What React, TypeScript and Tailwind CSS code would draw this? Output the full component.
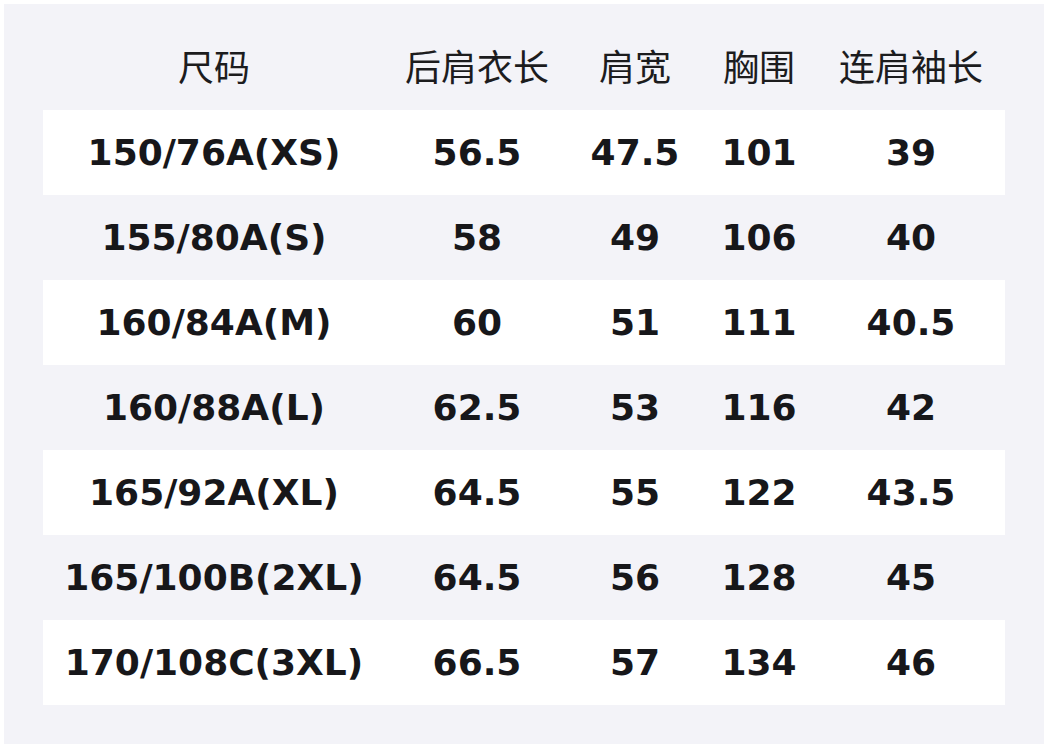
const headers = ["尺码", "后肩衣长", "肩宽", "胸围", "连肩袖长"];

const rows = [
  ["150/76A(XS)", "56.5", "47.5", "101", "39"],
  ["155/80A(S)", "58", "49", "106", "40"],
  ["160/84A(M)", "60", "51", "111", "40.5"],
  ["160/88A(L)", "62.5", "53", "116", "42"],
  ["165/92A(XL)", "64.5", "55", "122", "43.5"],
  ["165/100B(2XL)", "64.5", "56", "128", "45"],
  ["170/108C(3XL)", "66.5", "57", "134", "46"],
];

const cols = ["w-[342px]", "w-[184px]", "w-[132px]", "w-[116px]", "w-[188px]"];

export default function App() {
  return (
    <div className="w-[1048px] h-[748px] bg-white p-1">
      <div className="h-full bg-[#f3f3f8] px-[39px] pt-[24px]">
        <div className="flex h-[82px] items-center text-[36px] text-[#1c1c1e] font-['DejaVu_Sans','Noto_Sans_CJK_SC',sans-serif]">
          {headers.map((h, i) => (
            <div key={h} className={`${cols[i]} text-center`}>
              {h}
            </div>
          ))}
        </div>
        {rows.map((r, ri) => (
          <div
            key={r[0]}
            className={`flex h-[85px] items-center text-[36px] font-bold text-[#17171a] font-['DejaVu_Sans',sans-serif] ${
              ri % 2 === 0 ? "bg-white" : ""
            }`}
          >
            {r.map((c, i) => (
              <div key={i} className={`${cols[i]} text-center`}>
                {c}
              </div>
            ))}
          </div>
        ))}
      </div>
    </div>
  );
}
